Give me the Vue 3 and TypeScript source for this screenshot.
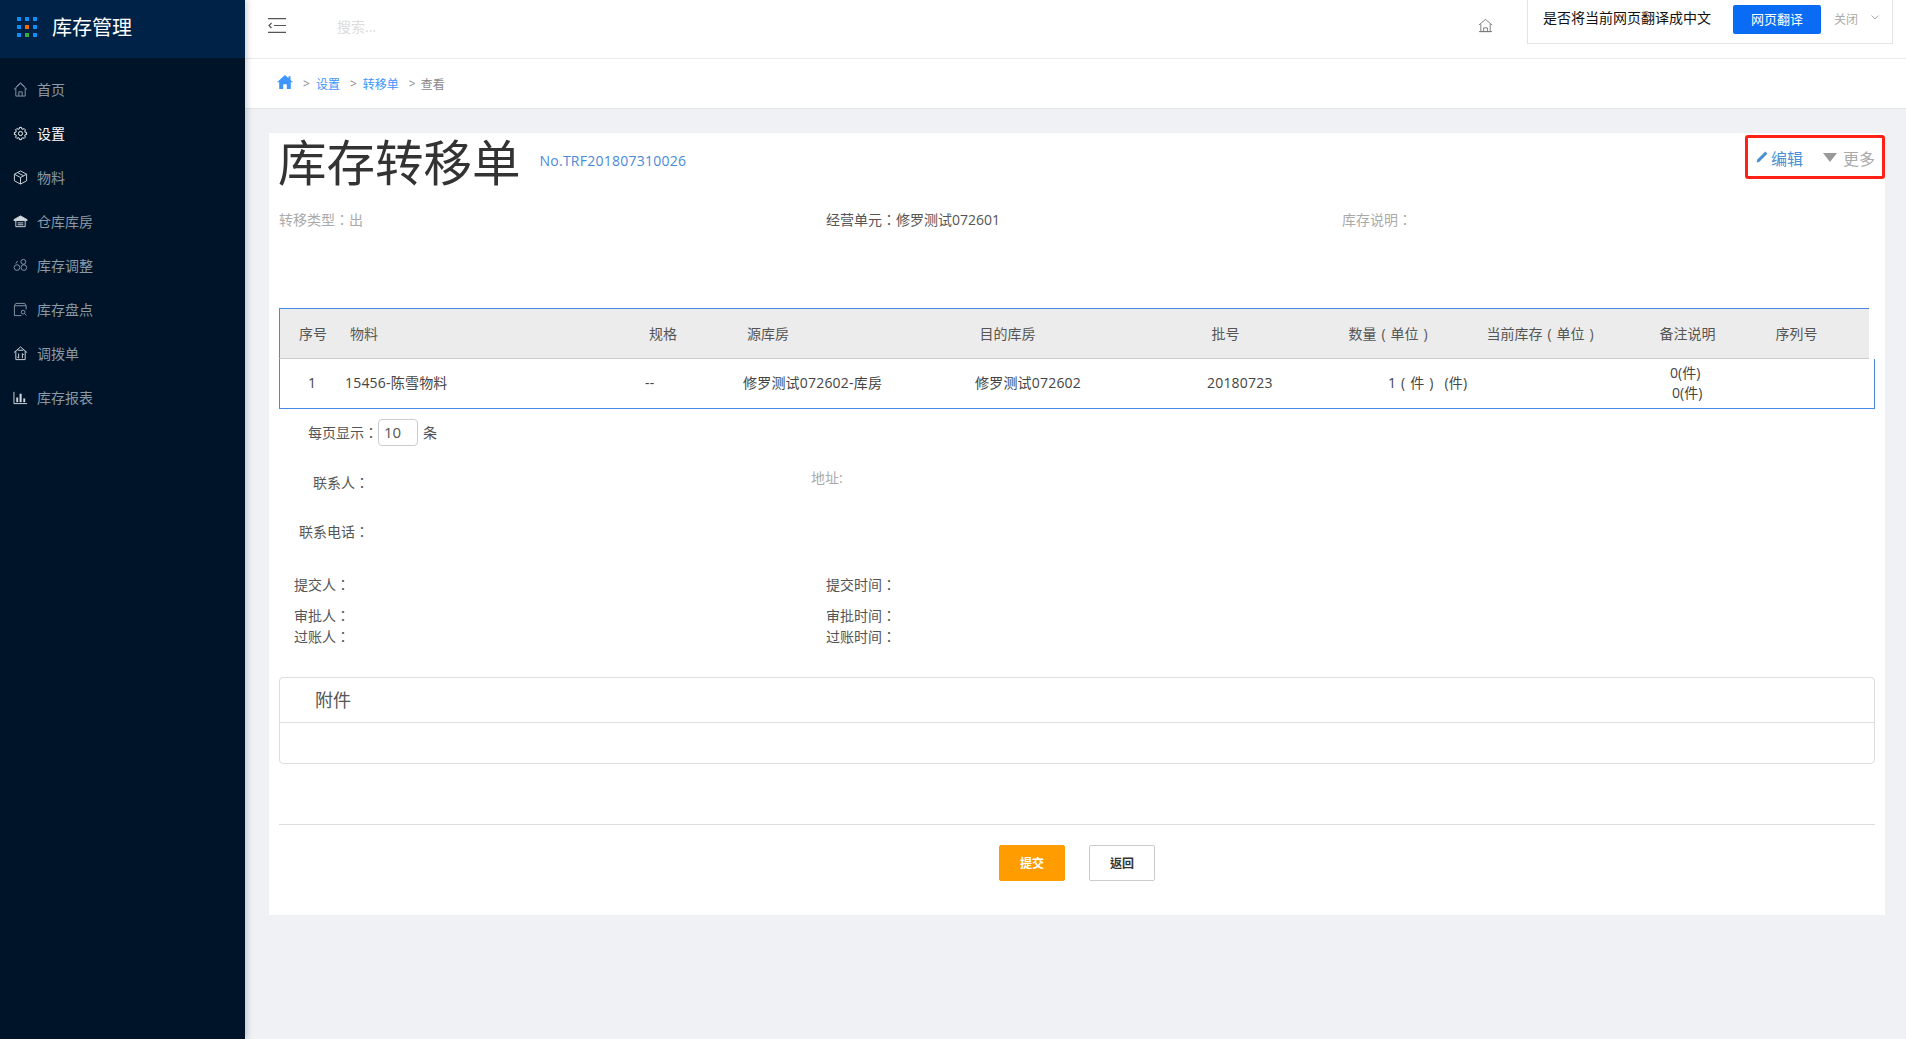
<script setup lang="ts">
interface NavItem {
  label: string
  active?: boolean
  bright?: boolean
  paths: string[]
  fill?: string[]
}

function gearPath(): string {
  const pts: string[] = []
  const teeth = 8
  for (let i = 0; i < teeth; i++) {
    const a = (i / teeth) * Math.PI * 2
    const step = Math.PI / teeth
    const spots: [number, number][] = [
      [a - step * 0.45, 6.6],
      [a + step * 0.45, 6.6],
      [a + step * 0.6, 5.2],
      [a + step * 1.4, 5.2]
    ]
    for (const [t, r] of spots) {
      pts.push(`${(8 + r * Math.cos(t)).toFixed(2)} ${(8 + r * Math.sin(t)).toFixed(2)}`)
    }
  }
  return `M${pts.join('L')}z`
}

const navItems: NavItem[] = [
  { label: '首页', paths: ['M1 8 8 1.500 15 8', 'M3 6.500V15h10V6.500', 'M6.200 15v-4.500h3.600V15', 'M3.500 5 8 .9 12.500 5'] },
  { label: '设置', active: true, paths: [gearPath(), 'M8 5.800a2.200 2.200 0 1 0 0 4.400 2.200 2.200 0 0 0 0-4.400z'] },
  { label: '物料', bright: true, paths: ['M8 1 14.500 4.500v7L8 15 1.500 11.500v-7z', 'M1.500 4.500 8 8l6.500-3.500', 'M8 8v7', 'M5 2.800l6 3.300'] },
  { label: '仓库库房', bright: true, paths: ['M1 6 8 2l7 4v1H1z', 'M3 7v6.500h10V7', 'M5 9.500h6', 'M5 11.500h6'], fill: ['M1 6 8 2l7 4v1H1z'] },
  { label: '库存调整', paths: ['M11 1.500a2.600 2.600 0 1 0 0 5.200 2.600 2.600 0 0 0 0-5.200z', 'M4.200 7.200a3 3 0 1 0 0 6 3 3 0 0 0 0-6z', 'M11.600 7.200a3 3 0 1 0 0 6 3 3 0 0 0 0-6z', 'M3 6l2-3'] },
  { label: '库存盘点', paths: ['M3 1.500h9.500L14 4H1.500z', 'M1.500 4v10.500H9', 'M14 4v4', 'M10.800 8.800a2 2 0 1 0 0 4 2 2 0 0 0 0-4z', 'M12.300 12.300l2 2'] },
  { label: '调拨单', bright: true, paths: ['M1 7 8 1l7 6', 'M3 5.500V14.500h10V5.500', 'M6 8v5l-1.400-1.500', 'M10 13V8l1.400 1.500', 'M5 4.500h6'] },
  { label: '库存报表', bright: true, paths: ['M1 2v12.500h14'], fill: ['M3.500 8h2v5h-2z', 'M7 4h2.200v9H7z', 'M11 9h2v4h-2z'] }
]

const headers: { text: string; unit?: string }[] = [
  { text: '序号' },
  { text: '物料' },
  { text: '规格' },
  { text: '源库房' },
  { text: '目的库房' },
  { text: '批号' },
  { text: '数量', unit: '单位' },
  { text: '当前库存', unit: '单位' },
  { text: '备注说明' },
  { text: '序列号' }
]
const dots = ['#0a8fff', '#0a8fff', '#0a8fff', '#0a8fff', '#ff6a00', '#0a8fff', '#0a8fff', '#37ad3a', '#0a8fff']
</script>

<template>
  <div class="app">
    <aside class="sidebar">
      <div class="brand">
        <div class="dots">
          <i v-for="(c, i) in dots" :key="i" :style="{ background: c }"></i>
        </div>
        <span class="brand-name">库存管理</span>
      </div>
      <nav class="nav">
        <a v-for="item in navItems" :key="item.label" class="nav-item" :class="{ active: item.active, bright: item.bright }">
          <svg class="nav-icon" viewBox="0 0 16 16" fill="none" stroke="currentColor" stroke-width="1">
            <path v-for="d in item.paths" :key="d" :d="d" />
            <path v-for="d in item.fill || []" :key="'f' + d" :d="d" fill="currentColor" stroke="none" />
          </svg>
          <span class="nav-text">{{ item.label }}</span>
        </a>
      </nav>
    </aside>

    <main class="main">
      <header class="topbar">
        <svg class="menu-icon" viewBox="0 0 18 15" fill="none" stroke="#555" stroke-width="1.200">
          <path d="M0 .7h18M6 7.500h12M0 14.300h18" />
          <path d="M3.500 5 1 7.500 3.500 10" />
        </svg>
        <span class="search">搜索...</span>
        <svg class="top-home" viewBox="0 0 16 16" fill="none" stroke="#777" stroke-width="1">
          <path d="M1 7.500 8 1.500l7 6" />
          <path d="M3 6.500V14.500h10V6.500" />
          <path d="M6 14.500v-4h4v4" />
          <path d="M1 14.500h14" />
        </svg>
        <div class="translate">
          <span class="translate-q">是否将当前网页翻译成中文</span>
          <span class="translate-btn">网页翻译</span>
          <span class="translate-close">关闭</span>
          <svg class="chevron" viewBox="0 0 8 5" fill="none" stroke="#aaa" stroke-width="1">
            <path d="M.5.5 4 4 7.500.5" />
          </svg>
        </div>
      </header>

      <div class="crumbs">
        <svg class="crumb-home" viewBox="0 0 16 14">
          <path d="M8 0 0 7.200h2.200V14h4V9.300h3.600V14h4V7.200H16L13.500 5V1.200h-2v2z" fill="#3d95ff" />
        </svg>
        <span class="sep">&gt;</span>
        <a class="crumb-link">设置</a>
        <span class="sep">&gt;</span>
        <a class="crumb-link">转移单</a>
        <span class="sep">&gt;</span>
        <span class="crumb-cur">查看</span>
      </div>

      <div class="content">
        <section class="card">
          <div class="title-row">
            <h1 class="title">库存转移单</h1>
            <span class="order-no">No.TRF201807310026</span>
            <div class="actions">
              <svg class="pencil" viewBox="0 0 12 12">
                <path d="M9.300.6 11.400 2.700 3.400 10.700.6 11.400 1.300 8.600z" fill="#4a8fd6" />
              </svg>
              <span class="edit">编辑</span>
              <i class="triangle"></i>
              <span class="more">更多</span>
            </div>
          </div>

          <div class="info-row">
            <span class="muted">转移类型：出</span>
            <span class="dark">经营单元：修罗测试072601</span>
            <span class="muted">库存说明：</span>
          </div>

          <div class="table">
            <div class="thead">
              <span v-for="h in headers" :key="h.text">
                {{ h.text }}<template v-if="h.unit"><i class="paren">(</i>{{ h.unit }}<i class="paren">)</i></template>
              </span>
            </div>
            <div class="tbody">
              <span>1</span>
              <span>15456-陈雪物料</span>
              <span>--</span>
              <span>修罗测试072602-库房</span>
              <span>修罗测试072602</span>
              <span>20180723</span>
              <span>1<i class="paren">(</i>件<i class="paren">)</i><span class="unit-note">(件)</span></span>
              <div class="notes">
                <span>0(件)</span>
                <span class="notes-second">0(件)</span>
              </div>
            </div>
          </div>

          <div class="pager">
            <span>每页显示：</span>
            <span class="page-size">10</span>
            <span>条</span>
          </div>

          <div class="contact-row">
            <span class="contact-label">联系人：</span>
            <span class="address">地址:</span>
          </div>
          <div class="contact-phone">
            <span class="contact-label">联系电话：</span>
          </div>

          <div class="people first">
            <span>提交人：</span>
            <span>提交时间：</span>
          </div>
          <div class="people second">
            <span>审批人：</span>
            <span>审批时间：</span>
          </div>
          <div class="people third">
            <span>过账人：</span>
            <span>过账时间：</span>
          </div>

          <div class="panel">
            <div class="panel-head">附件</div>
            <div class="panel-body"></div>
          </div>

          <div class="footer">
            <button class="btn primary" type="button">提交</button>
            <button class="btn" type="button">返回</button>
          </div>
        </section>
      </div>
    </main>
  </div>
</template>

<style>
html, body { margin: 0; height: 100%; background: #eff1f5; }
</style>

<style scoped>
.app {
  display: flex;
  height: 1039px;
  overflow: hidden;
  font-family: "Open Sans", "Noto Sans CJK TC", sans-serif;
  font-size: 14px;
  color: #444;
  background: #eff1f5;
}
.sidebar {
  width: 245px;
  flex: none;
  background: #001429;
  box-shadow: 2px 0 6px rgba(0, 20, 50, .2);
  z-index: 1;
}
.brand {
  height: 58px;
  background: #002246;
  display: flex;
  align-items: center;
  padding-left: 17px;
  gap: 15px;
}
.dots {
  display: grid;
  grid-template-columns: repeat(3, 4px);
  grid-auto-rows: 4px;
  gap: 4px;
  margin-bottom: 5px;
}
.brand-name { color: #fff; font-size: 20px; margin-bottom: 6px; }
.nav { padding-top: 10px; }
.nav-item {
  height: 44px;
  display: flex;
  align-items: center;
  padding-left: 13px;
  gap: 9px;
  color: #8b98a6;
}
.nav-text { margin-top: -2px; }
.nav-item.active { color: #fff; }
.nav-item.bright .nav-icon { color: #d5dae0; }
.nav-icon { width: 15px; height: 15px; flex: none; margin-top: -1px; }
.main { flex: 1; min-width: 0; display: flex; flex-direction: column; }
.topbar {
  height: 58px;
  flex: none;
  background: #fff;
  border-bottom: 1px solid #eaeaec;
  display: flex;
  align-items: flex-start;
  position: relative;
}
.menu-icon { width: 18px; height: 15px; margin: 18px 0 0 23px; flex: none; }
.search { margin: 16px 0 0 51px; color: #ddd; line-height: 22px; }
.top-home { width: 15px; height: 15px; margin: 18px 0 0 auto; flex: none; }
.translate {
  width: 366px;
  height: 44px;
  box-sizing: border-box;
  margin: 0 13px 0 34px;
  border: 1px solid #e3e3e3;
  border-top: 0;
  display: flex;
  align-items: center;
  padding-left: 15px;
  flex: none;
}
.translate-q { color: #111; width: 190px; flex: none; margin-top: -9px; }
.translate-btn {
  width: 88px;
  height: 29px;
  line-height: 28px;
  text-align: center;
  background: #0a6cf5;
  color: #fff;
  border-radius: 2px;
  font-size: 13px;
  margin-top: -5px;
  flex: none;
}
.translate-close { color: #aaa; font-size: 12px; margin: -5px 0 0 13px; }
.chevron { width: 8px; height: 5px; margin: -8px 0 0 13px; }
.crumbs {
  height: 49px;
  flex: none;
  background: #fff;
  border-bottom: 1px solid #e6e6ea;
  display: flex;
  align-items: center;
  padding-left: 32px;
  font-size: 12px;
  box-sizing: content-box;
}
.crumb-home { width: 16px; height: 14px; margin: -3px 4px 0 0; }
.sep { color: #888; margin: 0 6px 0 6px; }
.crumb-link { color: #3d95ff; margin-right: 4px; }
.crumb-cur { color: #888; margin-left: -1px; }
.content { flex: 1; padding: 24px 21px 0 24px; }
.card {
  background: #fff;
  padding: 0 10px 34px;
}
.title-row { display: flex; height: 56px; align-items: center; }
.title {
  margin: 0;
  font-size: 48.500px;
  font-weight: 400;
  line-height: 56px;
  color: #333;
  margin-left: -1px;
  padding-top: 1px;
}
.order-no {
  margin-left: 19px;
  color: #4a8ad8;
  letter-spacing: .25px;
  margin-top: -2px;
}
.actions {
  margin: 2px -10px 0 auto;
  align-self: flex-start;
  width: 140px;
  height: 44px;
  box-sizing: border-box;
  border: 3px solid #ff2016;
  border-radius: 3px;
  display: flex;
  align-items: center;
  padding-left: 8px;
  font-size: 16px;
}
.pencil { width: 12px; height: 12px; flex: none; }
.edit { color: #4a8fd6; margin: 2px 0 0 3px; }
.more { color: #aaa; margin: 2px 0 0 6px; }
.triangle {
  width: 0;
  height: 0;
  margin-left: 20px;
  border-left: 7px solid transparent;
  border-right: 7px solid transparent;
  border-top: 9px solid #999;
}
.info-row {
  display: grid;
  grid-template-columns: 547px 516px 1fr;
  margin-top: 19px;
  line-height: 24px;
}
.muted { color: #aaa; }
.dark { color: #555; }
.table { margin-top: 76px; }
.paren {
  display: inline-block;
  width: 14px;
  text-align: center;
  font-style: normal;
}
.thead {
  display: grid;
  grid-template-columns: 51px 299px 98px 232.500px 232px 137px 138px 173px 116px 1fr;
  height: 51px;
  box-sizing: border-box;
  align-items: center;
  margin-right: 6px;
  padding: 0 0 1px 19px;
  background: #ececec;
  border-top: 1px solid #4a8ae6;
  border-left: 1px solid #4a8ae6;
  border-bottom: 1px solid #ccc;
  color: #555;
}
.tbody {
  display: grid;
  grid-template-columns: 37px 300px 98px 232px 232px 181px 282px 1fr;
  height: 50px;
  box-sizing: border-box;
  align-items: center;
  padding: 0 0 2px 28px;
  border: 1px solid #4a8ae6;
  border-top: 0;
  color: #444;
  letter-spacing: .2px;
  line-height: 20px;
}
.unit-note { margin-left: 6px; }
.notes { display: flex; flex-direction: column; line-height: 20px; letter-spacing: 0; }
.notes-second { padding-left: 2px; }
.pager {
  display: flex;
  align-items: center;
  margin-top: 10px;
  padding-left: 29px;
  height: 27px;
  color: #555;
}
.pager > span:first-child,
.pager > span:last-child { margin-top: -2px; }
.page-size {
  width: 40px;
  height: 27px;
  box-sizing: border-box;
  border: 1px solid #ccc;
  border-radius: 4px;
  padding-left: 5px;
  line-height: 24px;
  font-size: 15px;
  margin: 0 5px 0 0;
}
.contact-row {
  display: flex;
  align-items: flex-start;
  margin-top: 22px;
  line-height: 20px;
}
.contact-label { width: 90px; text-align: right; color: #555; display: block; }
.contact-row .contact-label { padding-top: 5px; }
.address { margin-left: 442px; color: #aaa; }
.contact-phone { margin-top: 29px; line-height: 20px; }
.people {
  display: grid;
  grid-template-columns: 532px 1fr;
  padding-left: 15px;
  line-height: 20px;
  color: #555;
}
.people.first { margin-top: 33px; }
.people.second { margin-top: 11px; }
.people.third { margin-top: 1px; }
.panel {
  margin-top: 30px;
  border: 1px solid #ddd;
  border-radius: 4px;
}
.panel-head {
  height: 44px;
  line-height: 44px;
  padding-left: 35px;
  font-size: 18px;
  color: #555;
  border-bottom: 1px solid #ddd;
}
.panel-body { height: 40px; }
.footer {
  margin-top: 60px;
  padding-top: 20px;
  border-top: 1px solid #ddd;
  display: flex;
  justify-content: center;
  gap: 24px;
}
.btn {
  width: 66px;
  height: 36px;
  box-sizing: border-box;
  border: 1px solid #ccc;
  border-radius: 2px;
  background: #fff;
  color: #333;
  font-family: inherit;
  font-size: 12px;
  font-weight: 700;
  padding: 0;
}
.btn.primary { background: #ff9c00; border-color: #ff9c00; color: #fff; }
</style>
